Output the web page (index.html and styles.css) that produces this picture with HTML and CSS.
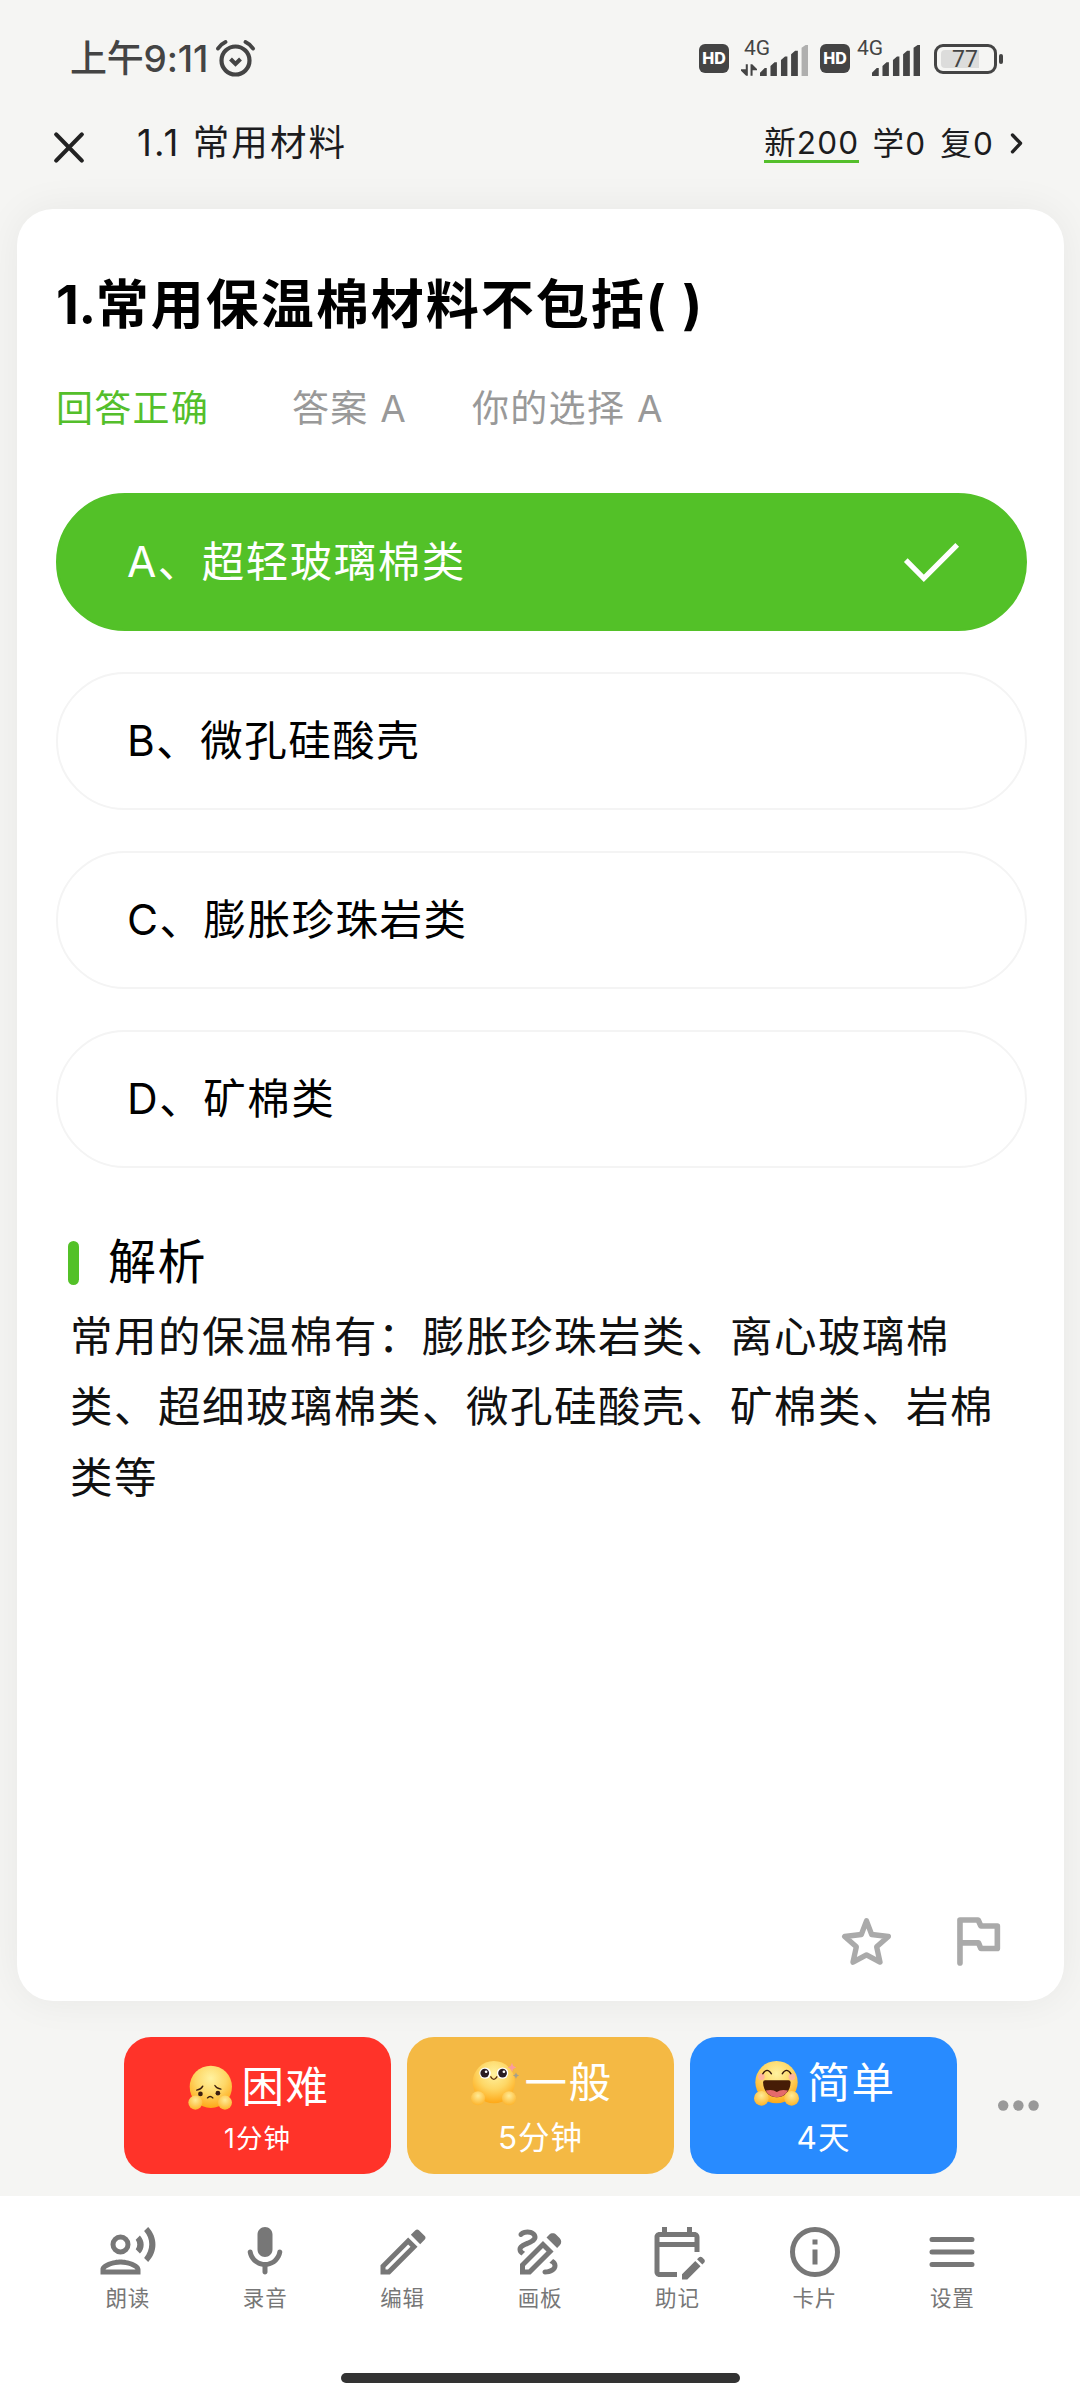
FILE: index.html
```html
<!DOCTYPE html>
<html lang="zh-CN">
    <head>
        <meta charset="utf-8" />
        <title>1.1 常用材料</title>
        <meta name="viewport" content="width=device-width, initial-scale=1.0" />
        <link rel="stylesheet" href="styles.css">
    </head>
    <body>
        <div class="statusbar">
            <span class="time">上午9:11</span>
            <svg class="alarm" viewBox="0 0 39 37" fill="none" stroke="#444" stroke-linecap="round">
                <circle cx="19.5" cy="20.5" r="14" stroke-width="4.2" />
                <path d="M14.5 19l5 5 5-5" stroke-width="4" stroke-linecap="butt" />
                <path d="M2 8.5Q5 4 9.5 2M37 8.5Q34 4 29.5 2" stroke-width="4" />
            </svg>
            <div class="statusIcons">
                <span class="hd">HD</span>
                <div class="signal signal1">
                    <span class="net">4G</span>
                    <svg class="arrows" viewBox="0 0 47 34" fill="#444">
                        <path d="M14 0h6v34h-5L0 19v-4h14zM28 0h5l14 14v4H34v16h-6z" />
                    </svg>
                    <svg class="bars" viewBox="0 0 142 91" fill="#444">
                        <path d="M0 82l14-14h6v23H0zM31 62l12-11h7v40H31zM62 44l12-10h7v57H62zM92 27l12-10h8v74H92z" />
                        <path d="M123 8l12-8h7v91h-19z" fill="#afafae" />
                    </svg>
                </div>
                <span class="hd">HD</span>
                <div class="signal signal2">
                    <span class="net">4G</span>
                    <svg class="bars" viewBox="0 0 142 91" fill="#444">
                        <path d="M0 82l14-14h6v23H0zM31 62l12-11h7v40H31zM62 44l12-10h7v57H62zM92 27l12-10h8v74H92zM123 8l12-8h7v91h-19z" />
                    </svg>
                </div>
                <div class="battery"><span class="level">77</span></div>
            </div>
        </div>

        <div class="topbar">
            <svg class="close" viewBox="0 0 30 31" fill="none" stroke="#222" stroke-width="4.2" stroke-linecap="round">
                <path d="M2.2 2.4l25.6 26.2M27.8 2.4L2.2 28.6" />
            </svg>
            <span class="pageTitle">1.1 常用材料</span>
            <div class="counts">
                <span class="new">新200</span>
                <span>学0</span>
                <span>复0</span>
                <svg class="chevron" viewBox="0 0 13 21" fill="none" stroke="#222" stroke-width="3.4" stroke-linecap="round" stroke-linejoin="round">
                    <path d="M2.5 2l8 8.3-8 8.5" />
                </svg>
            </div>
        </div>

        <div class="card">
            <h1><span class="number">1.</span>常用保温棉材料不包括( )</h1>
            <div class="result">
                <span class="correct">回答正确</span>
                <span class="answer">答案 A</span>
                <span>你的选择 A</span>
            </div>
            <div class="options">
                <div class="option selected">
                    <span>A、超轻玻璃棉类</span>
                    <svg class="check" viewBox="0 0 55 39" fill="none" stroke="#fff" stroke-width="5.2">
                        <path d="M1.8 17.2l18 18.2L53.2 1.8" />
                    </svg>
                </div>
                <div class="option"><span>B、微孔硅酸壳</span></div>
                <div class="option"><span>C、膨胀珍珠岩类</span></div>
                <div class="option"><span>D、矿棉类</span></div>
            </div>
            <h2>解析</h2>
            <p>常用的保温棉有：膨胀珍珠岩类、离心玻璃棉类、超细玻璃棉类、微孔硅酸壳、矿棉类、岩棉类等</p>
            <div class="cardTools">
                <svg class="star" viewBox="187 176 147 140" fill="none" stroke="#aaa" stroke-width="16" stroke-linejoin="round">
                    <path d="M260.5 184L276 225L326 231L291 262L301 308L260.5 286L220 308L230 262L195 231L245 225Z" />
                </svg>
                <svg class="flag" viewBox="530 179 130 146" fill="none" stroke="#aaa" stroke-width="17" stroke-linecap="round" stroke-linejoin="round">
                    <path d="M539 317V187H594L602 205H652V273H602L595 256H539" />
                </svg>
            </div>
        </div>

        <div class="grades">
            <div class="grade hard">
                <div class="gradeName">
                    <svg class="emoji" viewBox="0 0 134 134">
                        <defs>
                            <radialGradient id="face" cx="50%" cy="30%" r="72%">
                                <stop offset="0" stop-color="#fff2a0" />
                                <stop offset="0.5" stop-color="#fed766" />
                                <stop offset="1" stop-color="#fea512" />
                            </radialGradient>
                            <radialGradient id="hand" cx="50%" cy="32%" r="68%">
                                <stop offset="0" stop-color="#ffeb96" />
                                <stop offset="1" stop-color="#fdb42c" />
                            </radialGradient>
                        </defs>
                        <circle cx="68" cy="65" r="63" fill="url(#face)" />
                        <circle cx="37" cy="86" r="7" fill="#3a1d10" />
                        <circle cx="89" cy="84" r="7" fill="#3a1d10" />
                        <path d="M26 75q13-2 18-12M98 72q-13-2-18-11M58 98q8-8 16 0" fill="none" stroke="#3a1d10" stroke-width="4" stroke-linecap="round" />
                        <circle cx="22" cy="112" r="21" fill="url(#hand)" />
                        <circle cx="110" cy="112" r="21" fill="url(#hand)" />
                    </svg>
                    <span>困难</span>
                </div>
                <div class="gradeTime">1分钟</div>
            </div>
            <div class="grade normal">
                <div class="gradeName">
                    <svg class="emoji" viewBox="0 0 134 134">
                        <circle cx="68" cy="63" r="63" fill="url(#face)" />
                        <circle cx="42" cy="36" r="17" fill="#fff" />
                        <circle cx="94" cy="36" r="17" fill="#fff" />
                        <circle cx="41" cy="36" r="13" fill="#2a1d24" />
                        <circle cx="94" cy="36" r="13" fill="#2a1d24" />
                        <circle cx="45" cy="32" r="4" fill="#fff" />
                        <circle cx="98" cy="32" r="4" fill="#fff" />
                        <path d="M59 47q9 15 18 0" fill="none" stroke="#5a2c0c" stroke-width="4" stroke-linecap="round" />
                        <circle cx="21" cy="111" r="21" fill="url(#hand)" />
                        <circle cx="113" cy="111" r="21" fill="url(#hand)" />
                        <path d="M122 5l4 10 9 4-9 4-4 10-4-10-9-4 9-4z" fill="#fb9c9c" />
                        <path d="M134 34l3 6 6 3-6 3-3 7-3-7-6-3 6-3z" fill="#a5a08c" />
                    </svg>
                    <span>一般</span>
                </div>
                <div class="gradeTime">5分钟</div>
            </div>
            <div class="grade easy">
                <div class="gradeName">
                    <svg class="emoji" viewBox="0 0 134 134">
                        <circle cx="67" cy="63" r="63" fill="url(#face)" />
                        <circle cx="22" cy="47" r="10" fill="#ffb49c" />
                        <circle cx="113" cy="47" r="10" fill="#ffb49c" />
                        <path d="M26 38q13-20 26 0M84 38q13-20 26 0" fill="none" stroke="#35190c" stroke-width="4" stroke-linecap="round" />
                        <path d="M33 57h70q6 0 6 7c-1 26-18 44-41 44S28 90 27 64q0-7 6-7z" fill="#461c06" />
                        <path d="M35 88q20-5 33 4 13-9 33-4c-7 13-19 20-33 20S42 101 35 88z" fill="#e5696b" />
                        <circle cx="22" cy="111" r="22" fill="url(#hand)" />
                        <circle cx="112" cy="111" r="22" fill="url(#hand)" />
                    </svg>
                    <span>简单</span>
                </div>
                <div class="gradeTime">4天</div>
            </div>
            <svg class="more" viewBox="0 0 41 11" fill="#999">
                <circle cx="5.2" cy="5.5" r="5.2" />
                <circle cx="20.4" cy="5.5" r="5.2" />
                <circle cx="35.6" cy="5.5" r="5.2" />
            </svg>
        </div>

        <div class="bottom">
            <div class="nav">
                <div class="navItem">
                    <svg viewBox="0 0 24 24">
                        <path fill-rule="evenodd" d="M9 5a4 4 0 1 0 0 8a4 4 0 0 0 0-8zm0 2a2 2 0 1 1 0 4a2 2 0 0 1 0-4z" />
                        <path d="M9 15c-2.67 0-8 1.34-8 4v2h16v-2c0-2.66-5.33-4-8-4zm-6 4c.22-.72 3.31-2 6-2 2.7 0 5.8 1.29 6 2H3z" />
                        <path d="M15.08 7.05c.84 1.18.84 2.71 0 3.89l1.68 1.69c2.02-2.02 2.02-5.07 0-7.27l-1.68 1.69zM20.07 2l-1.63 1.63c2.77 3.02 2.77 7.56 0 10.74L20.07 16c3.9-3.89 3.91-9.95 0-14z" />
                    </svg>
                    <span>朗读</span>
                </div>
                <div class="navItem">
                    <svg viewBox="0 0 24 24">
                        <path d="M12 14c1.66 0 3-1.34 3-3V5c0-1.66-1.34-3-3-3S9 3.34 9 5v6c0 1.66 1.34 3 3 3zm5.91-3c-.49 0-.9.36-.98.85C16.52 14.2 14.47 16 12 16s-4.52-1.8-4.93-4.15c-.08-.49-.49-.85-.98-.85-.61 0-1.09.54-1 1.14.49 3 2.89 5.35 5.91 5.78V20c0 .55.45 1 1 1s1-.45 1-1v-2.08c3.02-.43 5.42-2.78 5.91-5.78.1-.6-.39-1.14-1-1.14z" />
                    </svg>
                    <span>录音</span>
                </div>
                <div class="navItem">
                    <svg viewBox="0 0 24 24">
                        <path d="M14.06 9L15 9.94 5.92 19H5v-.92L14.06 9m3.6-6c-.25 0-.51.1-.7.29l-1.83 1.83 3.75 3.75 1.83-1.83c.39-.39.39-1.04 0-1.41l-2.34-2.34c-.2-.2-.45-.29-.71-.29m-3.6 3.19L3 17.25V21h3.75L17.81 9.94l-3.75-3.75z" />
                    </svg>
                    <span>编辑</span>
                </div>
                <div class="navItem">
                    <svg viewBox="0 0 24 24">
                        <path d="M18.85 10.39l1.06-1.06c.78-.78.78-2.05 0-2.83L18.5 5.09c-.78-.78-2.05-.78-2.83 0l-1.06 1.06 4.24 4.24zm-4.24 1.42L7.41 19H6v-1.41l7.19-7.19 1.42 1.41zm-1.42-4.25L4 16.76V21h4.24l9.19-9.19-4.24-4.25zM19 17.5c0 2.19-2.54 3.5-5 3.5-.55 0-1-.45-1-1s.45-1 1-1c1.54 0 3-.73 3-1.5 0-.47-.48-.87-1.23-1.2l1.48-1.48c1.07.63 1.75 1.47 1.75 2.68zM4.58 13.35C3.61 12.79 3 12.06 3 11c0-1.8 1.89-2.63 3.56-3.36C7.59 7.18 9 6.56 9 6c0-.41-.78-1-2-1-1.26 0-1.8.61-1.83.64-.35.41-.98.46-1.4.12-.41-.34-.49-.95-.15-1.38C3.73 4.24 4.76 3 7 3s4 1.32 4 3c0 1.87-1.93 2.72-3.64 3.47C6.42 9.88 5 10.5 5 11c0 .31.43.6 1.07.86l-1.49 1.49z" />
                    </svg>
                    <span>画板</span>
                </div>
                <div class="navItem">
                    <svg viewBox="0 0 24 24">
                        <path d="M5 10h14v2h2V6c0-1.1-.9-2-2-2h-1V2h-2v2H8V2H6v2H5c-1.11 0-1.99.9-1.99 2L3 20c0 1.1.89 2 2 2h7v-2H5V10zm0-4h14v2H5V6zm17.84 10.28l-.71.71-2.12-2.12.71-.71c.39-.39 1.02-.39 1.41 0l.71.71c.39.39.39 1.02 0 1.41zm-3.54-.7l2.12 2.12-5.3 5.3H14v-2.12l5.3-5.3z" />
                    </svg>
                    <span>助记</span>
                </div>
                <div class="navItem">
                    <svg viewBox="0 0 24 24">
                        <circle cx="12" cy="12" r="9" fill="none" stroke="#777" stroke-width="2" />
                        <path d="M11 7h2v2h-2zM11 11h2v6h-2z" />
                    </svg>
                    <span>卡片</span>
                </div>
                <div class="navItem">
                    <svg viewBox="0 0 24 24">
                        <path d="M4 7h16M4 12h16M4 17h16" stroke="#777" stroke-width="2" stroke-linecap="round" />
                    </svg>
                    <span>设置</span>
                </div>
            </div>
            <div class="homeBar"></div>
        </div>
    </body>
</html>
```
FILE: styles.css
```css
* {
    box-sizing: border-box;
}

body {
    margin: 0;
    width: 1080px;
    height: 2400px;
    display: flex;
    flex-direction: column;
    overflow: hidden;
    background: #f5f5f3;
    font-family: Inter, 'Noto Sans CJK SC', sans-serif;
    color: #000;
}

svg {
    display: block;
    flex: none;
    overflow: visible;
}

/* status bar */
.statusbar {
    display: flex;
    align-items: center;
    height: 105px;
    padding: 12px 77px 0 70px;
    color: #444;
}

.time {
    width: 146px;
    font-size: 37px;
    font-weight: 500;
    white-space: nowrap;
    line-height: 50px;
    letter-spacing: -0.2px;
}

.alarm {
    width: 39px;
    height: 37px;
}

.statusIcons {
    display: flex;
    align-items: center;
    margin-left: auto;
}

.hd {
    width: 30px;
    height: 29px;
    border-radius: 6px;
    background: #444;
    color: #fff;
    font-size: 16px;
    font-weight: 800;
    line-height: 29px;
    text-align: center;
}

.signal {
    position: relative;
    display: flex;
    justify-content: flex-end;
    align-items: flex-end;
    height: 35px;
}

.signal1 {
    width: 67px;
    margin: 0 12px;
}

.signal2 {
    width: 63px;
    margin: 0 14px 0 7px;
}

.net {
    position: absolute;
    left: 0;
    top: -3px;
    font-family: Roboto, sans-serif;
    font-size: 21px;
    line-height: 21px;
}

.signal1 .net {
    left: 3px;
}

.arrows {
    width: 16px;
    height: 12px;
    margin-right: 3px;
}

.bars {
    width: 48px;
    height: 31px;
}

.battery {
    position: relative;
    width: 63px;
    height: 30px;
    padding: 3px 4px;
    margin-right: 6px;
    border: 3px solid #444;
    border-radius: 9px;
}

.battery::after {
    content: '';
    position: absolute;
    right: -9px;
    top: 7px;
    width: 4px;
    height: 10px;
    border-radius: 2px;
    background: #444;
}

.level {
    display: block;
    width: 38px;
    height: 18px;
    padding-left: 11px;
    border-radius: 4px 0 0 4px;
    background: #dcdcdb;
    font-family: Roboto, sans-serif;
    font-size: 23px;
    line-height: 19px;
}

/* top bar */
.topbar {
    display: flex;
    align-items: center;
    height: 84px;
    padding: 0 57px 0 54px;
    color: #1c1c1e;
}

.close {
    width: 30px;
    height: 31px;
}

.pageTitle {
    margin: -13px 0 0 53px;
    font-size: 36.5px;
    letter-spacing: 2.1px;
}

.counts {
    display: flex;
    align-items: center;
    margin-left: auto;
    font-size: 31.5px;
    line-height: 32px;
    letter-spacing: 1.2px;
}

.counts span {
    height: 35px;
    margin: -4px 14px 0 0;
}

.counts .new {
    border-bottom: 3px solid #54bf2b;
    margin: -4px 13px 0 0;
    height: 36px;
}

.chevron {
    width: 13px;
    height: 21px;
    margin-top: -7px;
    margin-left: 2px;
}

/* question card */
.card {
    display: flex;
    flex-direction: column;
    height: 1792px;
    margin: 20px 16px 0 17px;
    padding: 61px 37px 35px 39px;
    border-radius: 36px;
    background: #fff;
    box-shadow: 0 0 40px rgba(0, 0, 0, 0.06);
}

h1 {
    margin: 0;
    font-size: 53px;
    font-weight: 700;
    line-height: 70px;
    letter-spacing: 2px;
}

.number {
    letter-spacing: -0.4px;
}

.result {
    display: flex;
    margin-top: 44px;
    font-size: 37px;
    line-height: 50px;
    letter-spacing: 1.3px;
    color: #999;
}

.correct {
    width: 236px;
    color: #54bf2b;
}

.answer {
    width: 180px;
}

.options {
    display: flex;
    flex-direction: column;
    gap: 41px;
    margin-top: 59px;
}

.option {
    display: flex;
    align-items: center;
    justify-content: space-between;
    height: 138px;
    padding: 0 66px 0 69px;
    border: 2px solid #f4f4f4;
    border-radius: 69px;
    font-size: 42.5px;
    line-height: 60px;
    letter-spacing: 1.5px;
}

.option.selected {
    border-color: #53c128;
    background: #53c128;
    color: #fff;
}

.check {
    width: 55px;
    height: 39px;
}

h2 {
    display: flex;
    align-items: center;
    margin: 64px 0 0 12px;
    font-size: 48px;
    font-weight: 400;
    line-height: 60px;
    letter-spacing: 1.6px;
}

h2::before {
    content: '';
    width: 11px;
    height: 44px;
    margin: 2px 29px 0 0;
    border-radius: 6px;
    background: #53c128;
}

p {
    width: 940px;
    margin: 10px 0 0 14px;
    font-size: 42.5px;
    line-height: 70.4px;
    letter-spacing: 1.5px;
    color: #111;
}

.cardTools {
    display: flex;
    align-items: center;
    gap: 66px;
    margin: auto 27px 0 auto;
}

.star {
    width: 49px;
    height: 47px;
}

.flag {
    width: 43px;
    height: 49px;
}

/* grade buttons */
.grades {
    display: flex;
    align-items: center;
    gap: 16px;
    height: 195px;
    padding: 14px 0 0 124px;
}

.grade {
    display: flex;
    flex-direction: column;
    align-items: center;
    width: 267px;
    height: 137px;
    border-radius: 27px;
    color: #fff;
}

.hard {
    padding-top: 25px;
    background: #ff3329;
}

.normal {
    padding-top: 21px;
    background: #f4b944;
}

.easy {
    padding-top: 21px;
    background: #288bff;
}

.gradeName {
    display: flex;
    align-items: center;
    gap: 8px;
    height: 50px;
    padding-left: 3px;
    font-size: 42.5px;
    line-height: 50px;
    letter-spacing: 1.5px;
}

.emoji {
    width: 45px;
    height: 45px;
}

.gradeTime {
    margin-top: 6px;
    font-size: 31.5px;
    line-height: 48px;
    letter-spacing: 1px;
}

.hard .gradeTime {
    margin-top: 3px;
    font-size: 26.5px;
    line-height: 46px;
}

.more {
    width: 41px;
    height: 11px;
    margin-left: 25px;
}

/* bottom navigation */
.bottom {
    display: flex;
    flex-direction: column;
    align-items: center;
    height: 204px;
    padding-top: 26px;
    background: #fff;
}

.nav {
    display: flex;
    width: 962px;
}

.navItem {
    flex: 1;
    display: flex;
    flex-direction: column;
    align-items: center;
    font-size: 21.5px;
    line-height: 32px;
    letter-spacing: 0.8px;
    color: #777;
}

.navItem svg {
    width: 60px;
    height: 60px;
    fill: #777;
}

.homeBar {
    width: 399px;
    height: 10px;
    margin-top: 59px;
    border-radius: 5px;
    background: #333;
}
```
